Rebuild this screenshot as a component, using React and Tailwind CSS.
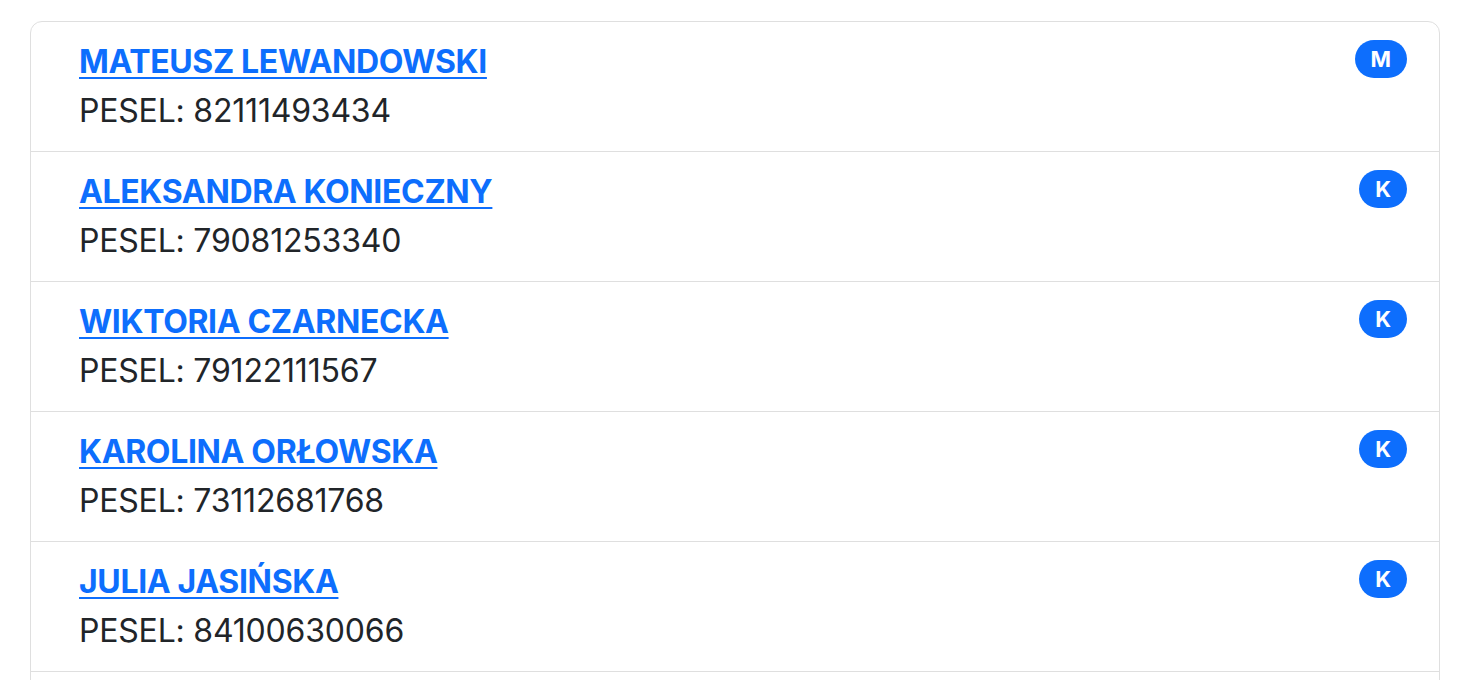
const patients = [
  { name: 'MATEUSZ LEWANDOWSKI', pesel: '82111493434', sex: 'M' },
  { name: 'ALEKSANDRA KONIECZNY', pesel: '79081253340', sex: 'K' },
  { name: 'WIKTORIA CZARNECKA', pesel: '79122111567', sex: 'K' },
  { name: 'KAROLINA ORŁOWSKA', pesel: '73112681768', sex: 'K' },
  { name: 'JULIA JASIŃSKA', pesel: '84100630066', sex: 'K' },
]

export default function App() {
  return (
    <div className="min-h-screen bg-white pl-[30px] pr-[38px] pt-[21px] font-['Inter','Liberation_Sans',sans-serif] text-[#212529]">
      <ul className="border border-[#dfdfdf] rounded-[12px] bg-white">
        {patients.map(({ name, pesel, sex }, i) => (
          <li
            key={pesel}
            className={`flex items-start justify-between px-8 py-4 ${i > 0 ? 'border-t border-[#dfdfdf]' : ''}`}
          >
            <div className="ml-4 mr-auto text-[32px] leading-[48.5px]">
              <a
                href="#"
                className="block font-bold tracking-[-0.35px] text-[#0d6efd] underline decoration-2 underline-offset-[4px]"
              >
                {name}
              </a>
              <div className="tracking-[-0.2px]">PESEL: {pesel}</div>
            </div>
            <span className="mt-[2px] inline-flex h-[38px] items-center justify-center rounded-full bg-[#0d6efd] px-4 text-[22px] font-bold leading-none text-white">
              {sex}
            </span>
          </li>
        ))}
        <li className="h-[129px] border-t border-[#dfdfdf]" />
      </ul>
    </div>
  )
}
